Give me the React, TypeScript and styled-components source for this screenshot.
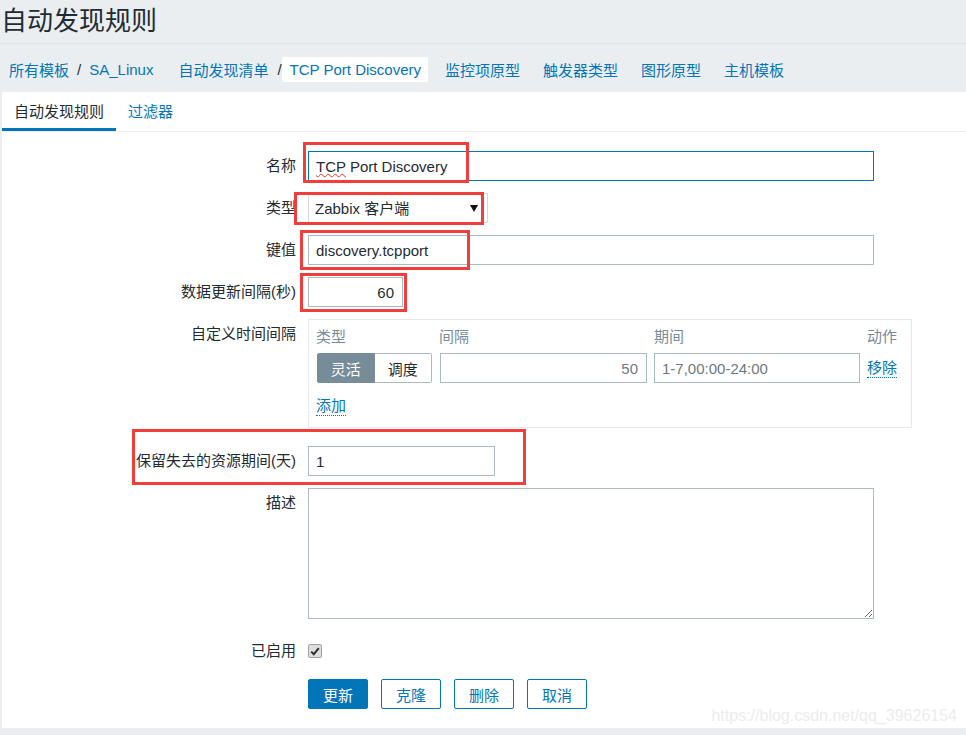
import styled, { createGlobalStyle } from "styled-components";

const GlobalStyle = createGlobalStyle`
  html, body {
    margin: 0;
    padding: 0;
    background: #ebeef1;
  }
  body {
    font-family: "Liberation Sans", "Noto Sans CJK SC", sans-serif;
    font-size: 15px;
    color: #1f2c33;
  }
  * {
    box-sizing: border-box;
  }
`;

const BLUE = "#0275b8";
const INPUT_BORDER = "#acbbc2";

const Page = styled.div`
  position: relative;
  width: 966px;
  height: 735px;
  overflow: hidden;
  background: #ebeef1;
`;

const Title = styled.h1`
  margin: 0;
  height: 44px;
  padding-left: 1px;
  line-height: 42px;
  font-size: 26px;
  font-weight: normal;
  color: #1f2c33;
  border-bottom: 1px solid #dde2e6;
`;

const Nav = styled.nav`
  display: flex;
  align-items: center;
  height: 48px;
  padding: 3px 0 1px 9px;
`;

const Crumbs = styled.div<{ $after: number }>`
  display: flex;
  align-items: center;
  margin-right: ${({ $after }) => $after}px;
`;

const NavLink = styled.a`
  color: ${BLUE};
  text-decoration: none;
  white-space: nowrap;
`;

const Sep = styled.span<{ $tight?: boolean }>`
  color: #1f2c33;
  margin: ${({ $tight }) => ($tight ? "0 0 0 9px" : "0 8px")};
`;

const Current = styled.span`
  height: 25px;
  padding: 0 7px 0 8px;
  line-height: 25px;
  background: #fff;
  border-radius: 2px;
  color: ${BLUE};
  white-space: nowrap;
`;

const NavLinks = styled.div`
  display: flex;
  gap: 23px;
`;

const Panel = styled.div`
  margin-left: 2px;
  height: 636px;
  background: #fff;
`;

const TabBar = styled.ul`
  display: flex;
  margin: 0;
  padding: 0;
  list-style: none;
  border-bottom: 1px solid #ebeef1;
`;

const Tab = styled.li<{ $active?: boolean }>`
  padding: 10px 12px 6px;
  line-height: 20px;
  color: ${({ $active }) => ($active ? "#1f2c33" : BLUE)};
  border-bottom: 3px solid ${({ $active }) => ($active ? BLUE : "transparent")};
`;

const Form = styled.div`
  display: flex;
  flex-direction: column;
  padding: 19px 0 18px;
`;

const Row = styled.div<{ $mt?: number }>`
  position: relative;
  display: grid;
  grid-template-columns: 294px 1fr;
  column-gap: 12px;
  margin-top: ${({ $mt }) => $mt ?? 12}px;
`;

const Label = styled.label`
  line-height: 30px;
  text-align: right;
  white-space: nowrap;
`;

const Field = styled.div`
  position: relative;
  display: flex;
  align-items: center;
  width: fit-content;
`;

const TextInput = styled.input<{ $w: number; $right?: boolean; $focus?: boolean; $muted?: boolean }>`
  width: ${({ $w }) => $w}px;
  height: 30px;
  padding: 0 8px 0 7px;
  border: 1px solid ${({ $focus }) => ($focus ? BLUE : INPUT_BORDER)};
  border-radius: 0;
  outline: none;
  font: inherit;
  color: ${({ $muted }) => ($muted ? "#6e7a81" : "#1f2c33")};
  text-align: ${({ $right }) => ($right ? "right" : "left")};
  background: #fff;
`;

const Squiggle = styled.span`
  position: absolute;
  left: 8px;
  top: 0;
  line-height: 30px;
  color: transparent;
  text-decoration: underline wavy #e0322f;
  text-decoration-thickness: 1px;
  text-underline-offset: 2px;
  pointer-events: none;
`;

const Select = styled.select`
  width: 180px;
  height: 30px;
  padding: 0 24px 0 6px;
  appearance: none;
  border: 1px solid #d3dadf;
  border-radius: 0;
  background: #fff;
  font: inherit;
  color: #1f2c33;
`;

const Arrow = styled.span`
  position: absolute;
  right: 10px;
  top: 12px;
  width: 0;
  height: 0;
  border-left: 4px solid transparent;
  border-right: 4px solid transparent;
  border-top: 7px solid #111;
  pointer-events: none;
`;

const IntervalBox = styled.div`
  width: 604px;
  padding: 7px 13px 11px 7px;
  border: 1px solid #e4e8eb;
`;

const IntervalGrid = styled.div`
  display: grid;
  grid-template-columns: 116px 207px 206px auto;
  column-gap: 7px;
  row-gap: 6px;
  align-items: center;

  & > :nth-child(n + 3) {
    margin-left: 1px;
  }
`;

const ColHead = styled.div`
  line-height: 20px;
  color: #768d99;
`;

const Segmented = styled.div`
  display: flex;
`;

const Segment = styled.button<{ $active?: boolean }>`
  width: 58px;
  height: 30px;
  padding: 0;
  font: inherit;
  color: ${({ $active }) => ($active ? "#fff" : "#1f2c33")};
  background: ${({ $active }) => ($active ? "#768d99" : "#fff")};
  border: 1px solid ${({ $active }) => ($active ? "#768d99" : INPUT_BORDER)};
  border-radius: ${({ $active }) => ($active ? "2px 0 0 2px" : "0 2px 2px 0")};
  ${({ $active }) => (!$active ? "border-left: none;" : "")}
`;

const DotLink = styled.a`
  display: inline-block;
  width: fit-content;
  line-height: 18px;
  color: ${BLUE};
  text-decoration: none;
  border-bottom: 1px dotted ${BLUE};
`;

const AddLink = styled(DotLink)`
  margin-top: 14px;
`;

const TextArea = styled.textarea`
  display: block;
  width: 566px;
  height: 131px;
  border: 1px solid ${INPUT_BORDER};
  border-radius: 0;
  font: inherit;
`;

const CheckBox = styled.span`
  display: flex;
  align-items: center;
  justify-content: center;
  width: 14px;
  height: 14px;
  border: 1px solid #a3a3a3;
  border-radius: 2px;
  background: #dedede;
`;

const Buttons = styled.div`
  display: flex;
  gap: 13px;
`;

const Button = styled.button<{ $primary?: boolean }>`
  width: 60px;
  height: 30px;
  padding: 0;
  font: inherit;
  color: ${({ $primary }) => ($primary ? "#fff" : BLUE)};
  background: ${({ $primary }) => ($primary ? BLUE : "#fff")};
  border: 1px solid ${BLUE};
  border-radius: 2px;
`;

const Mark = styled.span<{ $l: number; $t: number; $w: number; $h: number }>`
  position: absolute;
  left: ${({ $l }) => $l}px;
  top: ${({ $t }) => $t}px;
  width: ${({ $w }) => $w}px;
  height: ${({ $h }) => $h}px;
  border: 3px solid #f23d3d;
  pointer-events: none;
`;

const Watermark = styled.span`
  position: absolute;
  right: 9px;
  top: 706px;
  font-family: "Liberation Sans", sans-serif;
  font-size: 16px;
  line-height: 20px;
  color: #ececec;
  pointer-events: none;
`;

export default function App() {
  return (
    <Page>
      <GlobalStyle />
      <Title>自动发现规则</Title>
      <Nav>
        <Crumbs $after={25}>
          <NavLink>所有模板</NavLink>
          <Sep>/</Sep>
          <NavLink>SA_Linux</NavLink>
        </Crumbs>
        <Crumbs $after={17}>
          <NavLink>自动发现清单</NavLink>
          <Sep $tight>/</Sep>
          <Current>TCP Port Discovery</Current>
        </Crumbs>
        <NavLinks>
          <NavLink>监控项原型</NavLink>
          <NavLink>触发器类型</NavLink>
          <NavLink>图形原型</NavLink>
          <NavLink>主机模板</NavLink>
        </NavLinks>
      </Nav>

      <Panel>
        <TabBar>
          <Tab $active>自动发现规则</Tab>
          <Tab>过滤器</Tab>
        </TabBar>

        <Form>
          <Row $mt={0}>
            <Label>名称</Label>
            <Field>
              <TextInput $w={566} $focus defaultValue="TCP Port Discovery" />
              <Squiggle>TCP</Squiggle>
            </Field>
            <Mark $l={301} $t={-9} $w={166} $h={41} />
          </Row>

          <Row>
            <Label>类型</Label>
            <Field>
              <Select defaultValue="agent">
                <option value="agent">Zabbix 客户端</option>
              </Select>
              <Arrow />
            </Field>
            <Mark $l={292} $t={-1} $w={190} $h={33} />
          </Row>

          <Row>
            <Label>键值</Label>
            <Field>
              <TextInput $w={566} defaultValue="discovery.tcpport" />
            </Field>
            <Mark $l={298} $t={-5} $w={170} $h={40} />
          </Row>

          <Row>
            <Label>数据更新间隔(秒)</Label>
            <Field>
              <TextInput $w={95} $right defaultValue="60" />
            </Field>
            <Mark $l={298} $t={-4} $w={107} $h={39} />
          </Row>

          <Row>
            <Label>自定义时间间隔</Label>
            <IntervalBox>
              <IntervalGrid>
                <ColHead>类型</ColHead>
                <ColHead>间隔</ColHead>
                <ColHead>期间</ColHead>
                <ColHead>动作</ColHead>
                <Segmented>
                  <Segment $active>灵活</Segment>
                  <Segment>调度</Segment>
                </Segmented>
                <TextInput $w={207} $right $muted defaultValue="50" />
                <TextInput $w={206} $muted defaultValue="1-7,00:00-24:00" />
                <DotLink>移除</DotLink>
              </IntervalGrid>
              <AddLink>添加</AddLink>
            </IntervalBox>
          </Row>

          <Row $mt={18}>
            <Label>保留失去的资源期间(天)</Label>
            <Field>
              <TextInput $w={187} defaultValue="1" />
            </Field>
            <Mark $l={130} $t={-17} $w={394} $h={56} />
          </Row>

          <Row>
            <Label>描述</Label>
            <TextArea />
          </Row>

          <Row $mt={17}>
            <Label>已启用</Label>
            <Field>
              <CheckBox>
                <svg width="10" height="9" viewBox="0 0 10 9">
                  <path d="M1.2 4.6 L3.8 7.2 L8.8 1.2" fill="none" stroke="#2e2e2e" strokeWidth="2" />
                </svg>
              </CheckBox>
            </Field>
          </Row>

          <Row $mt={13}>
            <span />
            <Buttons>
              <Button $primary>更新</Button>
              <Button>克隆</Button>
              <Button>删除</Button>
              <Button>取消</Button>
            </Buttons>
          </Row>
        </Form>
      </Panel>

      <Watermark>https://blog.csdn.net/qq_39626154</Watermark>
    </Page>
  );
}
